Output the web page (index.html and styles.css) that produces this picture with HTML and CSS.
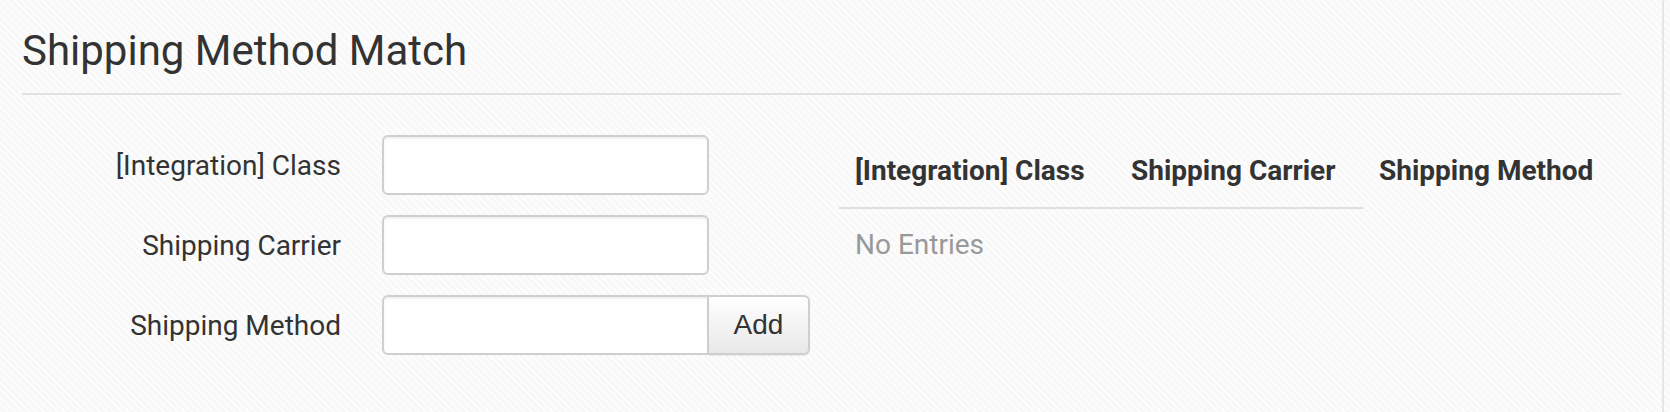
FILE: index.html
```html
<!DOCTYPE html>
<html>
<head>
<meta charset="utf-8">
<link rel="stylesheet" href="styles.css">
</head>
<body>
<div class="page">
  <div class="panel">
    <h1 class="title">Shipping Method Match</h1>
    <div class="content">
      <form class="form">
        <label class="label">[Integration] Class</label>
        <div class="field"><input class="input" type="text"></div>
        <label class="label">Shipping Carrier</label>
        <div class="field"><input class="input" type="text"></div>
        <label class="label">Shipping Method</label>
        <div class="field"><input class="input input-group" type="text"><button type="button" class="btn">Add</button></div>
      </form>
      <div class="table">
        <div class="thead">
          <div class="th th-1 lined">[Integration] Class</div>
          <div class="th th-2 lined">Shipping Carrier</div>
          <div class="th th-3">Shipping Method</div>
        </div>
        <div class="empty">No Entries</div>
      </div>
    </div>
  </div>
</div>
</body>
</html>
```

FILE: styles.css
```css
html, body {
  margin: 0;
  padding: 0;
}
body {
  width: 1670px;
  height: 412px;
  overflow: hidden;
  font-family: Roboto, "Liberation Sans", sans-serif;
  color: #333;
  background-color: #f8f8f8;
  background-image: repeating-linear-gradient(45deg, rgba(255,255,255,0.7) 0 2px, rgba(0,0,0,0) 2px 5px);
}
.page {
  height: 412px;
  box-sizing: border-box;
  width: 1664px;
  border-right: 2px solid #e6e6e6;
  padding: 26px 41px 0 22px;
}
.title {
  margin: 0;
  font-size: 42px;
  font-weight: 400;
  line-height: 50px;
  padding-bottom: 17px;
  border-bottom: 2px solid #e2e2e2;
  color: #333;
}
.content {
  display: flex;
  padding-top: 40px;
}
.form {
  display: grid;
  grid-template-columns: 319px auto;
  column-gap: 41px;
  row-gap: 20px;
  align-items: center;
  align-content: start;
  width: 817px;
}
.label {
  text-align: right;
  font-size: 28px;
  color: #333;
}
.field {
  display: flex;
}
.input {
  box-sizing: border-box;
  width: 327px;
  height: 60px;
  border: 2px solid #cfcfcf;
  border-radius: 6px;
  background: #fff;
  box-shadow: inset 0 2px 2px rgba(0,0,0,0.06);
  margin: 0;
  padding: 0 12px;
  font-size: 24px;
  outline: none;
}
.input-group {
  border-radius: 6px 0 0 6px;
}
.btn {
  box-sizing: border-box;
  width: 101px;
  height: 60px;
  margin: 0;
  border: 2px solid #cfcfcf;
  border-left: none;
  border-radius: 0 6px 6px 0;
  background: linear-gradient(#ffffff, #e8e8e8);
  box-shadow: 0 1px 1px rgba(0,0,0,0.08);
  font-family: "Liberation Sans", Arial, sans-serif;
  font-size: 28px;
  color: #333;
  padding: 0;
}
.table {
  display: flex;
  flex-direction: column;
}
.thead {
  display: flex;
}
.th {
  box-sizing: content-box;
  height: 72px;
  line-height: 72px;
  padding: 0 16px;
  font-size: 28px;
  font-weight: 700;
  color: #333;
  white-space: nowrap;
}
.lined {
  border-bottom: 2px solid #dedede;
}
.th-1 { width: 244px; }
.th-2 { width: 216px; }
.empty {
  height: 72px;
  line-height: 72px;
  padding: 0 16px;
  font-size: 28px;
  color: #999;
}
```
